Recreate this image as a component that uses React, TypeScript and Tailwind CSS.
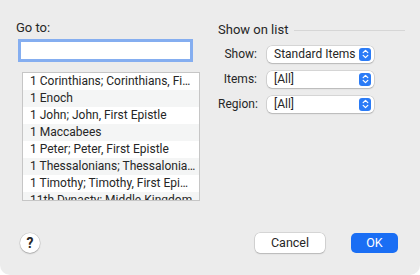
import React from "react";

const rows = [
	"1 Corinthians; Corinthians, Fi…",
	"1 Enoch",
	"1 John; John, First Epistle",
	"1 Maccabees",
	"1 Peter; Peter, First Epistle",
	"1 Thessalonians; Thessalonia…",
	"1 Timothy; Timothy, First Epi…",
	"11th Dynasty; Middle Kingdom",
];

function Stepper() {
	return (
		<span className="flex h-[13px] w-[12px] items-center justify-center rounded-[3px] bg-[#2a7bf6]">
			<svg width="7" height="10" viewBox="0 0 7 10" fill="none">
				<polyline points="1.2,3.6 3.5,1.4 5.8,3.6" stroke="white" strokeWidth="1.3" strokeLinecap="round" strokeLinejoin="round" />
				<polyline points="1.2,6.4 3.5,8.6 5.8,6.4" stroke="white" strokeWidth="1.3" strokeLinecap="round" strokeLinejoin="round" />
			</svg>
		</span>
	);
}

function PopUp({ label, value }: { label: string; value: string }) {
	return (
		<div className="flex items-center">
			<span className="w-[39px] whitespace-nowrap text-right">{label}</span>
			<div className="ml-[10px] flex h-[17px] w-[107px] items-center justify-between rounded-[5px] bg-white pl-[7px] pr-[3px] shadow-[0_0_0_0.5px_rgba(0,0,0,0.18),0_1px_1.5px_rgba(0,0,0,0.15)]">
				<span className="whitespace-nowrap leading-[17px]">{value}</span>
				<Stepper />
			</div>
		</div>
	);
}

const App = () => {
	return (
		<div className="h-[275px] w-[420px] bg-white font-['Roboto',sans-serif] text-[12px] text-[#262626]">
			<div className="flex h-full flex-col rounded-b-[10px] bg-[#ececec]">
				<div className="flex pl-[16px] pt-[20px]">
					{/* left: go to */}
					<div className="flex w-[184px] flex-col">
						<span className="text-[13px] leading-[16px]">Go to:</span>
						<div className="ml-[5px] mt-[6px] h-[17px] w-[169px] bg-white ring-[3px] ring-[#85aef0]" />
						<div className="ml-[6px] mt-[13px] h-[129px] w-[178px] overflow-hidden border border-[#c6c6c6] bg-white">
							{rows.map((r, i) => (
								<div
									key={r}
									className={
										"h-[17px] truncate pl-[7px] leading-[17px] " +
										(i % 2 === 1 ? "bg-[#f4f5f5]" : "bg-white")
									}
								>
									{r}
								</div>
							))}
						</div>
					</div>

					{/* right: show on list */}
					<div className="ml-[18px] flex w-[187px] flex-col">
						<div className="mt-[2px] flex items-center">
							<span className="text-[13px] leading-[16px]">Show on list</span>
							<div className="ml-[6px] h-px flex-1 bg-[#d6d6d6]" />
						</div>
						<div className="mt-[7px] flex flex-col gap-[7px]">
							<PopUp label="Show:" value="Standard Items" />
							<PopUp label="Items:" value="[All]" />
							<PopUp label="Region:" value="[All]" />
						</div>
					</div>
				</div>

				{/* bottom buttons */}
				<div className="mt-auto flex items-center pb-[22px] pl-[20px] pr-[22px]">
					<button className="flex h-[20px] w-[20px] items-center justify-center rounded-full bg-white text-[14px] font-bold leading-none shadow-[0_0_0_0.5px_rgba(0,0,0,0.15),0_1px_1.5px_rgba(0,0,0,0.2)]">
						?
					</button>
					<button className="ml-auto h-[20px] w-[70px] rounded-[5px] bg-white text-[12.5px] leading-[20px] shadow-[0_0_0_0.5px_rgba(0,0,0,0.18),0_1px_1.5px_rgba(0,0,0,0.15)]">
						Cancel
					</button>
					<button className="ml-[26px] h-[20px] w-[47px] rounded-[5px] bg-[#1a6ef4] text-[12.5px] leading-[20px] text-white">
						OK
					</button>
				</div>
			</div>
		</div>
	);
};

export default App;
